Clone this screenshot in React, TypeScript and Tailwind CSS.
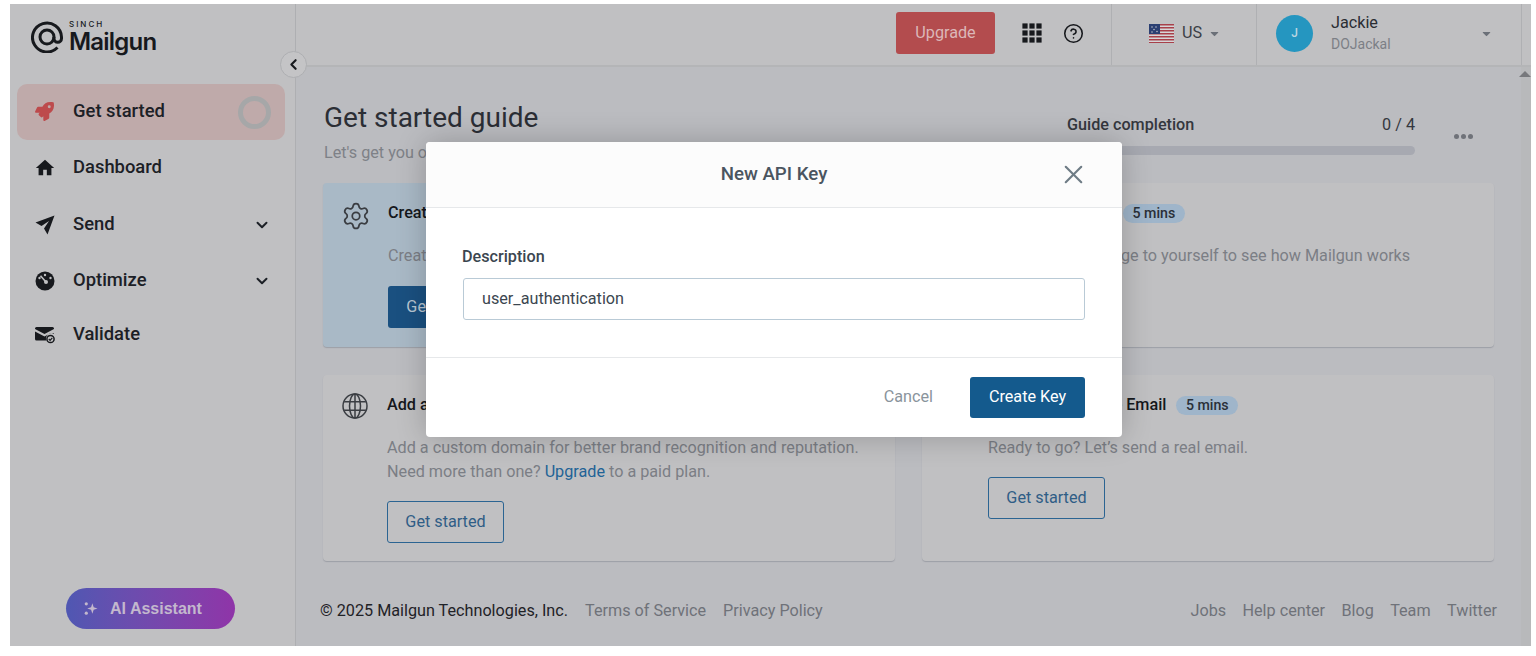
import { Settings, X, ChevronDown, ChevronLeft, CircleHelp } from "lucide-react";
import { FaRocket, FaCaretDown } from "react-icons/fa";
import { MdHome } from "react-icons/md";

function GaugeIcon() {
  return (
    <svg viewBox="0 0 20 20" className="h-[20px] w-[20px]">
      <circle cx="10" cy="10" r="9.5" fill="#17191d" />
      <circle cx="10" cy="4" r="1.2" fill="#c0c0c2" />
      <circle cx="15.5" cy="7" r="1.2" fill="#c0c0c2" />
      <circle cx="4.5" cy="7" r="1.2" fill="#c0c0c2" />
      <path d="M5.5 4.8 L10.5 10.5" stroke="#c0c0c2" strokeWidth="1.6" />
      <circle cx="11" cy="11" r="2" fill="#c0c0c2" />
    </svg>
  );
}

function PlaneIcon() {
  return (
    <svg viewBox="0 0 20 20" className="h-[20px] w-[20px]" fill="#17191d">
      <path d="M19.5 0.5 L0.5 7.5 L6.5 11 L14 6 L9 13.5 L12.5 19.5 Z" />
    </svg>
  );
}

function ValidateIcon() {
  return (
    <svg viewBox="0 0 20 18" className="h-[18px] w-[20px]">
      <path d="M1.5 1h16a1.5 1.5 0 0 1 1.5 1.5V3L9.5 8 0 3v-.5A1.5 1.5 0 0 1 1.5 1z" fill="#17191d" />
      <path d="M0 5.5l9.5 5 6-3.2h3.5V8a5.5 5.5 0 0 0-7.8 6.5H1.5A1.5 1.5 0 0 1 0 13z" fill="#17191d" />
      <circle cx="15.5" cy="13" r="3.6" fill="none" stroke="#17191d" strokeWidth="1.5" />
      <path d="M13.8 13l1.3 1.3 2.2-2.4" fill="none" stroke="#17191d" strokeWidth="1.2" />
    </svg>
  );
}

function GlobeIcon() {
  return (
    <svg viewBox="0 0 26 26" className="h-[26px] w-[26px]" fill="none" stroke="#3a3d42" strokeWidth="1.5">
      <circle cx="13" cy="13" r="12" />
      <ellipse cx="13" cy="13" rx="5.5" ry="12" />
      <path d="M13 1v24M2.2 8.8h21.6M2.2 17.2h21.6" />
    </svg>
  );
}

function Logo() {
  return (
    <div className="flex items-center gap-[6px]">
      <svg viewBox="0 0 32 32" className="h-[32px] w-[32px]" fill="none" stroke="#17191d" strokeWidth="3">
        <path d="M26.5 26.5A14.5 14.5 0 1 1 30.5 16v1.5a3.8 3.8 0 0 1-7.6 0V16" />
        <circle cx="16" cy="16" r="7" />
      </svg>
      <div className="flex flex-col font-['Inter',sans-serif] text-[#17191d]">
        <span className="h-[9px] text-[8px] font-medium leading-[9px] tracking-[2px]">SINCH</span>
        <span className="h-[25px] text-[24px] font-semibold leading-[25px] tracking-[-0.8px]">Mailgun</span>
      </div>
    </div>
  );
}

function NavItem({ icon, label, active, chevron, ring, className = "" }: { icon: React.ReactNode; label: string; active?: boolean; chevron?: boolean; ring?: boolean; className?: string }) {
  return (
    <div className={`flex h-[56px] items-center rounded-[10px] pl-[18px] pr-[14px] ${active ? "bg-[#bfaaaa]" : ""} ${className}`}>
      <div className="flex w-[38px] shrink-0 items-center pb-[1px]">{icon}</div>
      <span className="flex-1 pb-[3px] text-[18.4px] font-medium text-[#1c2026]">{label}</span>
      {chevron && <ChevronDown size={18} strokeWidth={2.6} className="text-[#1c2026]" />}
      {ring && <div className="h-[33px] w-[33px] rounded-full border-[5px] border-[#a6a7a8]" />}
    </div>
  );
}

function Badge() {
  return <span className="rounded-full bg-[#9fb5ca] px-[9.5px] py-[1px] text-[14.2px] font-medium leading-[17px] text-[#2a3038]">5 mins</span>;
}

function OutlineButton() {
  return (
    <button className="h-[42px] w-[117px] rounded-[3px] border-[1.5px] border-[#2b6492] text-[16.2px] text-[#2f5d86]">Get started</button>
  );
}

function Card({ icon, title, badge, active, children, solid, lower, iconCol }: { icon: React.ReactNode; title: string; badge?: boolean; active?: boolean; children: React.ReactNode; solid?: boolean; lower?: boolean; iconCol: string }) {
  return (
    <div className={`flex rounded-[4px] pl-[19px] pr-[20px] pt-[18px] shadow-[0_1px_1px_rgba(120,125,135,0.45)] ${lower ? "pb-[18px]" : "pb-[19px]"} ${active ? "bg-[#a9b9c6]" : "bg-[#c0c0c2]"}`}>
      <div className={`flex shrink-0 ${iconCol}`}>{icon}</div>
      <div className="flex flex-col items-start">
        <div className="flex h-[24px] items-center gap-[10px]">
          <span className="text-[16.2px] font-medium text-[#15181c]">{title}</span>
          {badge && <Badge />}
        </div>
        <div className="mt-[19px] text-[16.2px] leading-[24px] text-[#7b7e85]">{children}</div>
        <div className={lower ? "mt-[17px]" : "mt-[18px]"}>
          {solid ? (
            <button className="h-[42px] w-[117px] rounded-[3px] bg-[#1a5080] text-[16.2px] text-[#b8c6d2]">Get started</button>
          ) : (
            <OutlineButton />
          )}
        </div>
      </div>
    </div>
  );
}

function Flag() {
  return (
    <svg viewBox="0 0 25 19" className="h-[19px] w-[25px]">
      <rect width="25" height="19" fill="#d6d6d8" />
      {[0, 3, 6, 9, 12, 15, 18].map((y) => (
        <rect key={y} y={y} width="25" height="1.5" fill="#a8404a" />
      ))}
      <rect width="11" height="10" fill="#2b3f72" />
      <circle cx="3" cy="3" r="0.7" fill="#d6d6d8" />
      <circle cx="7" cy="3" r="0.7" fill="#d6d6d8" />
      <circle cx="5" cy="5.5" r="0.7" fill="#d6d6d8" />
      <circle cx="3" cy="8" r="0.7" fill="#d6d6d8" />
      <circle cx="8" cy="7.5" r="0.7" fill="#d6d6d8" />
    </svg>
  );
}

function Dots() {
  return (
    <svg viewBox="0 0 20 20" className="h-[20px] w-[20px]" fill="#17191d">
      {[3, 10, 17].flatMap((x) =>
        [3, 10, 17].map((y) => <rect key={`${x}-${y}`} x={x - 2.6} y={y - 2.6} width="5.2" height="5.2" />)
      )}
    </svg>
  );
}

export default function App() {
  return (
    <div className="h-[656px] w-[1536px] overflow-hidden bg-white pl-[10px] pt-[4px] font-['Roboto',sans-serif]">
      <div className="relative flex h-[642px] w-[1521px] overflow-hidden bg-[#c0c0c2]">
        {/* Sidebar */}
        <aside className="flex w-[286px] shrink-0 flex-col border-r border-[#aeafb2] pl-[7px] pr-[10px]">
          <div className="flex h-[80px] items-start pl-[14px] pt-[16px]">
            <Logo />
          </div>
          <nav className="flex flex-col">
            <NavItem active ring label="Get started" icon={<FaRocket size={19} className="text-[#bd4a4c]" />} />
            <NavItem label="Dashboard" icon={<MdHome size={22} className="-ml-[1px] text-[#17191d]" />} />
            <NavItem chevron label="Send" icon={<PlaneIcon />} className="mt-[1px]" />
            <NavItem chevron label="Optimize" icon={<GaugeIcon />} />
            <NavItem label="Validate" icon={<ValidateIcon />} className="-mt-[2px]" />
          </nav>
          <div className="mt-auto mb-[17px] flex justify-center pr-[1px]">
            <button className="flex h-[41px] w-[169px] items-center justify-center gap-[12px] rounded-full bg-gradient-to-r from-[#4f57b2] to-[#8f34a8] pr-[16px] font-['Liberation_Sans',sans-serif] text-[16px] font-bold text-[#c3b8cd]">
              <svg viewBox="0 0 16 16" className="h-[15px] w-[15px]" fill="#c3b8cd">
                <path d="M10 2.5l1.4 4.1L15.5 8l-4.1 1.4L10 13.5 8.6 9.4 4.5 8l4.1-1.4z" />
                <circle cx="3.5" cy="3" r="1.7" />
                <circle cx="3.5" cy="13" r="1.7" />
              </svg>
              AI Assistant
            </button>
          </div>
        </aside>

        {/* Main column */}
        <div className="flex min-w-0 flex-1 flex-col">
          <header className="flex h-[63px] shrink-0 items-stretch justify-end border-b-2 border-[#b4b5b7]">
            <div className="flex items-center pb-[3px] pr-[27px]">
              <button className="h-[42px] w-[99px] rounded-[3px] bg-[#b34c4e] text-[16.2px] text-[#dcb7b8]">Upgrade</button>
              <div className="ml-[27px]"><Dots /></div>
              <CircleHelp size={21} strokeWidth={1.8} className="ml-[21px] text-[#17191d]" />
            </div>
            <div className="flex w-[145px] items-center border-l border-[#afb0b3] pb-[3px] pl-[37px]">
              <Flag />
              <span className="ml-[8px] text-[16.2px] text-[#3b3f46]">US</span>
              <FaCaretDown size={13} className="ml-[6px] text-[#6b7078]" />
            </div>
            <div className="flex w-[275px] items-center border-l border-[#afb0b3] pl-[19px]">
              <div className="mb-[3px] flex h-[37px] w-[37px] items-center justify-center rounded-full bg-[#2596c0] text-[12px] font-medium text-[#b9d5e0]">J</div>
              <div className="mb-[3px] ml-[18px] flex w-[144px] flex-col">
                <span className="text-[16.2px] leading-[22px] text-[#2a2d33]">Jackie</span>
                <span className="text-[14px] leading-[20px] text-[#7c7f86]">DOJackal</span>
              </div>
              <FaCaretDown size={13} className="mb-[3px] ml-[5px] text-[#6b7078]" />
              <div className="ml-auto mr-[9px] h-full w-px bg-[#afb0b3]" />
            </div>
          </header>

          <div className="flex min-h-0 flex-1 bg-[#bbbcc0]">
            <main className="flex min-w-0 flex-1 flex-col pl-[27px] pr-[27px]">
              <div className="flex h-[116px] shrink-0 items-start">
                <div className="flex-1 pl-[1px] pt-[32px]">
                  <h1 className="text-[28px] leading-[38px] text-[#2b2e35]">Get started guide</h1>
                  <p className="mt-[6px] text-[16.2px] leading-[20px] text-[#7e8187]">Let's get you on your way</p>
                </div>
                <div className="mt-[48px] w-[348px]">
                  <div className="flex justify-between text-[16.2px] leading-[20px]">
                    <span className="font-medium text-[#34373e]">Guide completion</span>
                    <span className="text-[#34373e]">0 / 4</span>
                  </div>
                  <div className="mt-[11px] h-[9px] rounded-full bg-[#a7a9b1]" />
                </div>
                <div className="ml-[39px] mt-[67px] flex w-[40px] gap-[2px] self-start">
                  <span className="h-[5px] w-[5px] shrink-0 rounded-full bg-[#6f7279]" />
                  <span className="h-[5px] w-[5px] shrink-0 rounded-full bg-[#6f7279]" />
                  <span className="h-[5px] w-[5px] shrink-0 rounded-full bg-[#6f7279]" />
                </div>
              </div>

              <div className="grid grid-cols-2 gap-x-[27px] gap-y-[28px]">
                <Card active solid iconCol="w-[46px]" title="Create an API key" icon={<Settings size={30} strokeWidth={1.4} className="-ml-[1px] text-[#3a3d42]" />}>
                  Create an API key to start sending
                </Card>
                <Card badge iconCol="w-[47px]" title="Send a test email" icon={<Settings size={28} strokeWidth={1.4} className="text-[#3a3d42]" />}>
                  Send a test message to yourself to see how Mailgun works
                </Card>
                <Card lower iconCol="w-[45px]" title="Add a custom domain" icon={<GlobeIcon />}>
                  Add a custom domain for better brand recognition and reputation.
                  <br />
                  Need more than one? <span className="text-[#1f6396]">Upgrade</span> to a paid plan.
                </Card>
                <Card lower badge iconCol="w-[47px]" title="Send your first live Email" icon={<GlobeIcon />}>
                  Ready to go? Let’s send a real email.
                </Card>
              </div>

              <footer className="-ml-[3px] mt-[39px] flex items-center justify-between text-[16.2px] leading-[22px] text-[#6f7279]">
                <div className="flex gap-[17px]">
                  <span className="text-[#1f2227]">© 2025 Mailgun Technologies, Inc.</span>
                  <span>Terms of Service</span>
                  <span>Privacy Policy</span>
                </div>
                <div className="-mr-[3px] flex gap-[16.4px]">
                  <span>Jobs</span>
                  <span>Help center</span>
                  <span>Blog</span>
                  <span>Team</span>
                  <span>Twitter</span>
                </div>
              </footer>
            </main>
            <div className="relative w-[10px] shrink-0 bg-[#b8b9bb]">
              <div className="absolute right-0 top-[4px] h-0 w-0 border-b-[6px] border-l-[6px] border-r-[6px] border-b-[#77787c] border-l-transparent border-r-transparent" />
            </div>
          </div>
        </div>

        {/* Collapse handle */}
        <button className="absolute left-[270px] top-[47px] flex h-[27px] w-[27px] items-center justify-center rounded-full border border-[#aeafb2] bg-[#c4c4c6]">
          <ChevronLeft size={17} strokeWidth={3} className="text-[#17191d]" />
        </button>

        {/* Modal */}
        <div className="absolute left-[416px] top-[138px] flex h-[295px] w-[696px] flex-col overflow-hidden rounded-[4px] bg-white shadow-[0_0_30px_rgba(0,0,0,0.22)]">
          <div className="relative flex h-[66px] shrink-0 items-center justify-center border-b border-[#e6e8ea] bg-[#fcfcfc] pb-[1px]">
            <span className="text-[18.7px] font-medium text-[#4a5560]">New API Key</span>
            <X size={31} strokeWidth={1.6} className="absolute right-[33px] top-[17px] text-[#6e7b85]" />
          </div>
          <div className="h-[150px] shrink-0 border-b border-[#e6e8ea] pl-[36px] pr-[37px] pt-[38px]">
            <label className="block text-[16.2px] font-medium leading-[22px] text-[#3b4650]">Description</label>
            <div className="ml-[1px] mt-[10px] flex h-[42px] items-center rounded-[3px] border border-[#b9cad6] pl-[18px] text-[16.2px] text-[#3b4650]">user_authentication</div>
          </div>
          <div className="flex flex-1 items-center justify-end pr-[37px]">
            <span className="mr-[37px] text-[16.2px] text-[#8a949c]">Cancel</span>
            <button className="h-[41px] w-[115px] rounded-[3px] bg-[#145a8d] text-[16.2px] text-white">Create Key</button>
          </div>
        </div>
      </div>
    </div>
  );
}
